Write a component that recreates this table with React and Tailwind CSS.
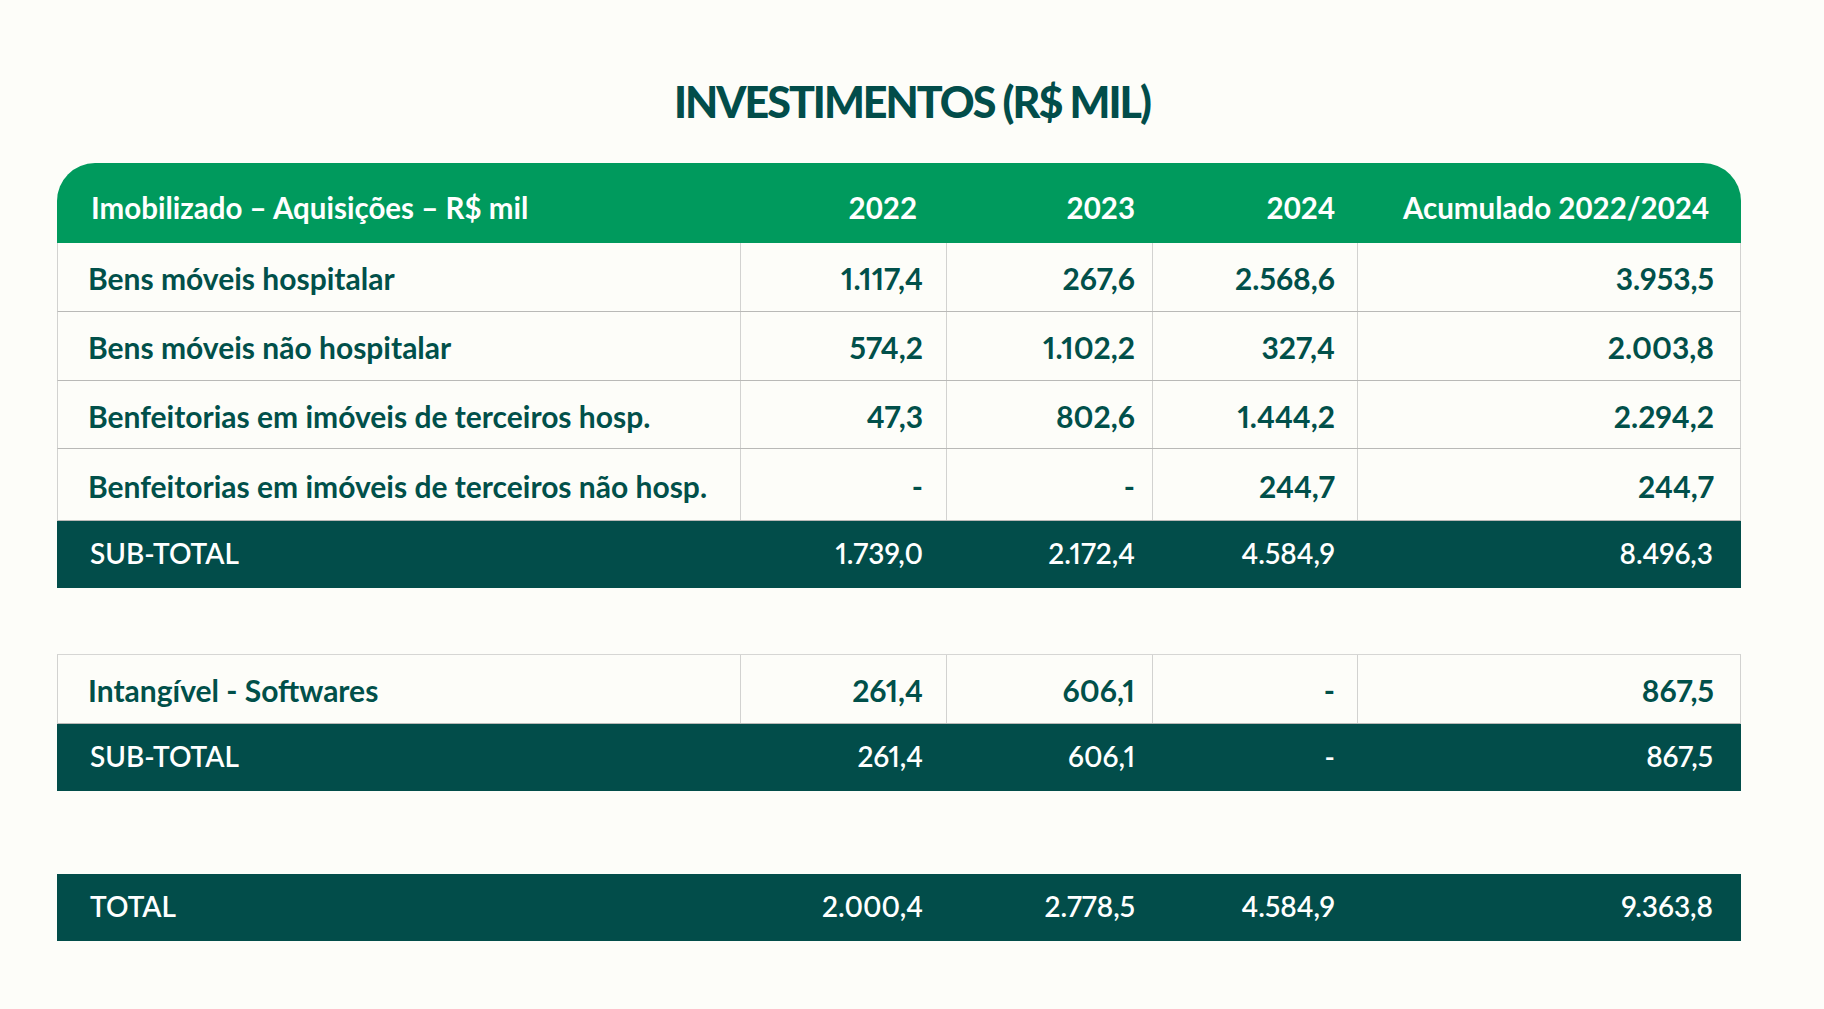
import React from 'react';

const cols = 'grid grid-cols-[683px_206px_206px_205px_384px]';

const imobilizado = [
  { h: 'h-[69px]', row: ['Bens móveis hospitalar', '1.117,4', '267,6', '2.568,6', '3.953,5'] },
  { h: 'h-[69px]', row: ['Bens móveis não hospitalar', '574,2', '1.102,2', '327,4', '2.003,8'] },
  { h: 'h-[68px]', row: ['Benfeitorias em imóveis de terceiros hosp.', '47,3', '802,6', '1.444,2', '2.294,2'] },
  { h: 'h-[72px]', row: ['Benfeitorias em imóveis de terceiros não hosp.', '-', '-', '244,7', '244,7'] },
];

// padding direita de cada coluna numérica (o PDF original não é uniforme)
const numPad = ['pr-[23px]', 'pr-[17px]', 'pr-[22px]', 'pr-[28px]'];

const DataRow = ({ row, h, topBorder }) => (
  <div
    className={`${cols} ${h} bg-[#fdfdf9] border-x border-[#d2d2d0] border-b border-b-[#b9b9b7] ${
      topBorder ? 'border-t border-t-[#d6d6d4]' : ''
    }`}
  >
    <div className="flex items-center pl-[30px] pt-[3px] border-r border-[#d2d2d0]">{row[0]}</div>
    {row.slice(1).map((v, i) => (
      <div
        key={i}
        className={`flex items-center justify-end pt-[3px] proportional-nums ${numPad[i]} ${
          i < 3 ? 'border-r border-[#d2d2d0]' : ''
        }`}
      >
        {v}
      </div>
    ))}
  </div>
);

const TotalRow = ({ label, values }) => (
  <div className={`${cols} h-[67px] bg-[#024d4a] text-white text-[28px] font-semibold`}>
    <div className="flex items-center pl-[33px] pb-[3px]">{label}</div>
    {values.map((v, i) => (
      <div key={i} className={`flex items-center justify-end pb-[3px] proportional-nums ${numPad[i]}`}>
        {v}
      </div>
    ))}
  </div>
);

export default function App() {
  return (
    <div className="min-h-screen bg-[#fdfdf9] font-['Lato',sans-serif] text-[#01504a] pt-[74px] pb-10">
      <h1 className="text-center text-[43px] leading-[56px] font-black tracking-[-2px] text-[#024d4a]">
        INVESTIMENTOS (R$ MIL)
      </h1>

      <div className="ml-[57px] w-[1684px] mt-[33px] text-[30px] font-bold">
        <div className={`${cols} h-[80px] bg-[#009a5d] rounded-t-[38px] text-white font-bold text-[29.5px]`}>
          <div className="flex items-center pl-[34px] pt-[10px]">Imobilizado – Aquisições – R$ mil</div>
          <div className="flex items-center justify-end pr-[29px] pt-[10px]">2022</div>
          <div className="flex items-center justify-end pr-[17px] pt-[10px]">2023</div>
          <div className="flex items-center justify-end pr-[22px] pt-[10px]">2024</div>
          <div className="flex items-center justify-end pr-[32px] pt-[10px]">Acumulado 2022/2024</div>
        </div>

        {imobilizado.map((r) => (
          <DataRow key={r.row[0]} row={r.row} h={r.h} />
        ))}
        <TotalRow label="SUB-TOTAL" values={['1.739,0', '2.172,4', '4.584,9', '8.496,3']} />

        <div className="mt-[66px]">
          <DataRow row={['Intangível - Softwares', '261,4', '606,1', '-', '867,5']} h="h-[70px]" topBorder />
          <TotalRow label="SUB-TOTAL" values={['261,4', '606,1', '-', '867,5']} />
        </div>

        <div className="mt-[83px]">
          <TotalRow label="TOTAL" values={['2.000,4', '2.778,5', '4.584,9', '9.363,8']} />
        </div>
      </div>
    </div>
  );
}
